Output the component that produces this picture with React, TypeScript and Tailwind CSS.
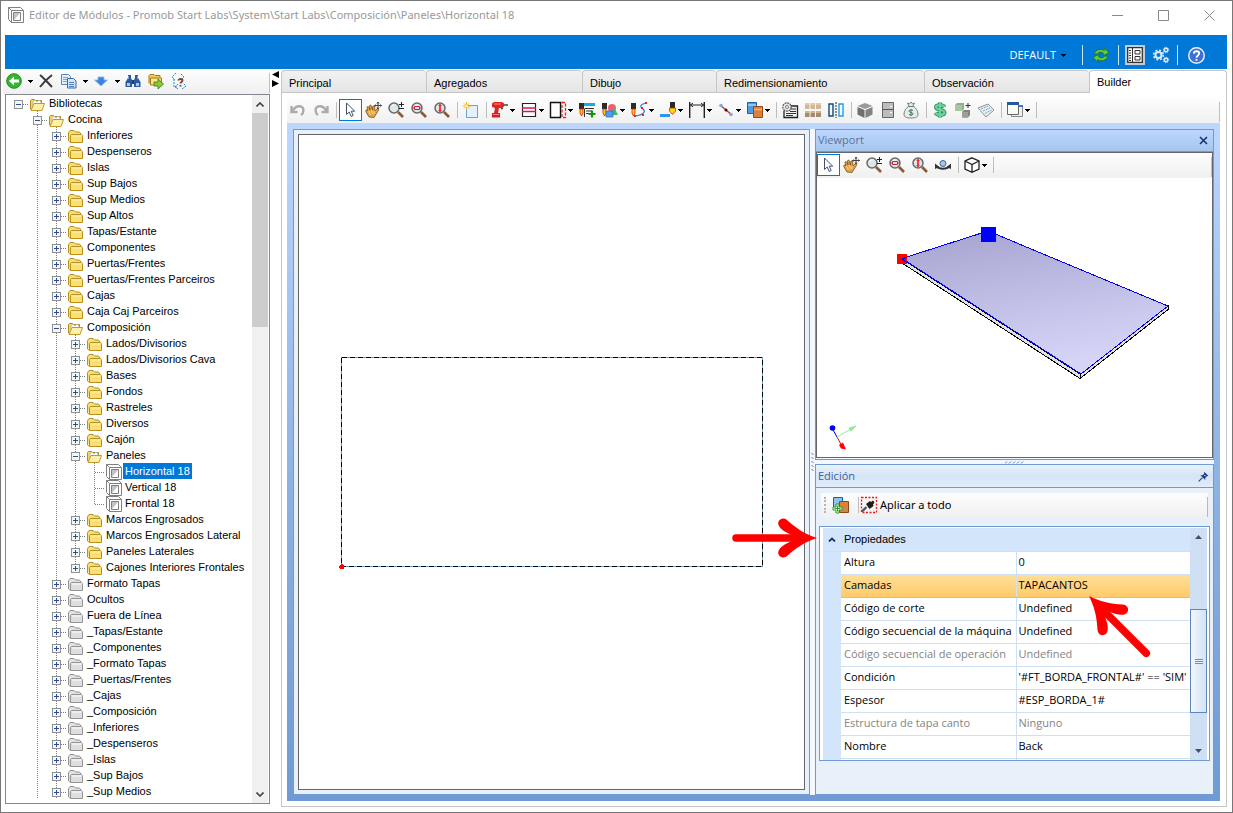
import type { ReactNode } from 'react';
import clsx from 'clsx';

type Tool = { icon: string; label: string; menu?: boolean; active?: boolean } | 'sep';
type Node = { label: string; depth: number; kind: 'open' | 'folder' | 'gray' | 'module'; last?: boolean; selected?: boolean };

const folders = (depth: number, kind: Node['kind'], labels: string[]): Node[] =>
  labels.map((label) => ({ label, depth, kind }));

const tree: Node[] = [
  { label: 'Bibliotecas', depth: 0, kind: 'open' },
  { label: 'Cocina', depth: 1, kind: 'open' },
  ...folders(2, 'folder', [
    'Inferiores', 'Despenseros', 'Islas', 'Sup Bajos', 'Sup Medios', 'Sup Altos', 'Tapas/Estante',
    'Componentes', 'Puertas/Frentes', 'Puertas/Frentes Parceiros', 'Cajas', 'Caja Caj Parceiros',
  ]),
  { label: 'Composición', depth: 2, kind: 'open' },
  ...folders(3, 'folder', [
    'Lados/Divisorios', 'Lados/Divisorios Cava', 'Bases', 'Fondos', 'Rastreles', 'Diversos', 'Cajón',
  ]),
  { label: 'Paneles', depth: 3, kind: 'open' },
  { label: 'Horizontal 18', depth: 4, kind: 'module', selected: true },
  { label: 'Vertical 18', depth: 4, kind: 'module' },
  { label: 'Frontal 18', depth: 4, kind: 'module', last: true },
  ...folders(3, 'folder', ['Marcos Engrosados', 'Marcos Engrosados Lateral', 'Paneles Laterales']),
  { label: 'Cajones Interiores Frontales', depth: 3, kind: 'folder', last: true },
  ...folders(2, 'gray', [
    'Formato Tapas', 'Ocultos', 'Fuera de Línea', '_Tapas/Estante', '_Componentes', '_Formato Tapas',
    '_Puertas/Frentes', '_Cajas', '_Composición', '_Inferiores', '_Despenseros', '_Islas', '_Sup Bajos', '_Sup Medios',
  ]),
];

const tabs = [
  { label: 'Principal', width: 'w-[145px]' },
  { label: 'Agregados', width: 'w-[156px]' },
  { label: 'Dibujo', width: 'w-[134px]' },
  { label: 'Redimensionamiento', width: 'w-[208px]' },
  { label: 'Observación', width: 'w-[165px]' },
  { label: 'Builder', width: 'flex-1', active: true },
];

const libraryTools: Tool[] = [
  { icon: 'back', label: 'Volver', menu: true },
  { icon: 'delete', label: 'Eliminar' },
  { icon: 'copy', label: 'Copiar', menu: true },
  { icon: 'down', label: 'Mover', menu: true },
  { icon: 'find', label: 'Buscar' },
  { icon: 'export', label: 'Exportar' },
  { icon: 'structure', label: 'Estructura' },
];

const builderTools: Tool[] = [
  { icon: 'undo', label: 'Deshacer' },
  { icon: 'redo', label: 'Rehacer' },
  'sep',
  { icon: 'cursor', label: 'Seleccionar', active: true },
  { icon: 'hand', label: 'Desplazar' },
  { icon: 'zoom', label: 'Zoom' },
  { icon: 'zoomWindow', label: 'Zoom ventana' },
  { icon: 'zoomExtents', label: 'Zoom extensión' },
  'sep',
  { icon: 'new', label: 'Nuevo' },
  'sep',
  { icon: 'drill', label: 'Perforación', menu: true },
  { icon: 'groove', label: 'Ranura', menu: true },
  { icon: 'edge', label: 'Borde', menu: true },
  { icon: 'toolList', label: 'Lista de herramientas' },
  { icon: 'shapes', label: 'Formas', menu: true },
  { icon: 'path', label: 'Trayectoria', menu: true },
  { icon: 'cut', label: 'Corte', menu: true },
  { icon: 'dimension', label: 'Cota', menu: true },
  { icon: 'line', label: 'Línea', menu: true },
  { icon: 'panels', label: 'Paneles', menu: true },
  'sep',
  { icon: 'program', label: 'Programa' },
  { icon: 'blocks', label: 'Bloques' },
  { icon: 'mirror', label: 'Espejar' },
  'sep',
  { icon: 'box', label: 'Módulo' },
  { icon: 'cabinet', label: 'Puerta' },
  { icon: 'bag', label: 'Costo' },
  'sep',
  { icon: 'dollar', label: 'Presupuesto' },
  { icon: 'cubes', label: 'Componentes' },
  { icon: 'notes', label: 'Notas' },
  'sep',
  { icon: 'windows', label: 'Ventanas', menu: true },
  'sep',
];

const viewportTools: Tool[] = [
  { icon: 'cursor', label: 'Seleccionar 3D', active: true },
  { icon: 'hand', label: 'Desplazar 3D' },
  { icon: 'zoom', label: 'Zoom 3D' },
  { icon: 'zoomWindow', label: 'Zoom ventana 3D' },
  { icon: 'zoomExtents', label: 'Zoom extensión 3D' },
  { icon: 'orbit', label: 'Orbitar' },
  'sep',
  { icon: 'cube', label: 'Vista', menu: true },
  'sep',
];

const properties = [
  { name: 'Altura', value: '0' },
  { name: 'Camadas', value: 'TAPACANTOS', selected: true },
  { name: 'Código de corte', value: 'Undefined' },
  { name: 'Código secuencial de la máquina', value: 'Undefined' },
  { name: 'Código secuencial de operación', value: 'Undefined', disabled: true },
  { name: 'Condición', value: "'#FT_BORDA_FRONTAL#' == 'SIM'" },
  { name: 'Espesor', value: '#ESP_BORDA_1#' },
  { name: 'Estructura de tapa canto', value: 'Ninguno', disabled: true },
  { name: 'Nombre', value: 'Back' },
];

const lens = (
  <>
    <path d="M10 10l5 5" stroke="#8a5a35" strokeWidth="2.600" />
    <circle cx="6" cy="6" r="5" fill="#dfe6e8" stroke="#66696b" strokeWidth="1.500" />
    <path d="M3.500 5c.5-1.500 1.500-2 3-2" stroke="#fff" />
  </>
);

const bit = (
  <>
    <path d="M0 1h5v6H0z" fill="#2b2b2b" />
    <path d="M1 7h3v4l-1.500 3L1 11z" fill="#ffd800" stroke="#e01010" strokeWidth=".8" />
  </>
);

const icons: Record<string, ReactNode> = {
  back: (
    <>
      <circle cx="8" cy="8" r="7.300" fill="#35b52f" stroke="#1f8a1f" strokeWidth="1" />
      <path d="M3 8l5-4.500v3h5v3H8v3z" fill="#fff" />
    </>
  ),
  delete: <path d="M2 2c4 3 8 8 12 12M14 2C10 5 6 9 2 14" stroke="#3a3a3a" strokeWidth="2" fill="none" />,
  copy: (
    <>
      <path d="M.5 1.500h7l2 2v8h-9z" fill="#e4eefb" stroke="#5a86c0" />
      <path d="M2 4.500h5M2 6.500h5M2 8.500h5" stroke="#7ba4d8" />
      <path d="M6.500 5.500h6l2.500 2.500v7H6.500z" fill="#d3e4f9" stroke="#3a69ad" />
      <path d="M8 9.500h5M8 11.500h5M8 13.500h5" stroke="#4f7fc4" />
    </>
  ),
  down: <path d="M5 4h6v3h3.500L8 13 1.500 7H5z" fill="#3f82e0" stroke="#8db6f0" strokeWidth=".8" />,
  find: (
    <>
      <path d="M3 2h3v3l1 2v7H.5V9L3 5zM10 2h3v3l2.500 4v5H9V7l1-2z" fill="#2e5a9c" />
      <path d="M7 7h2v4H7z" fill="#1c3f78" />
      <path d="M2 10h3v3H2zM11 10h3v3h-3z" fill="#a9c7ef" />
      <path d="M3.500 3v3M12.500 3v3" stroke="#7fa6da" />
    </>
  ),
  export: (
    <>
      <path d="M1 10.500V2.500l1-1h4l1 1h5v2" fill="#f0cf58" stroke="#a67c12" />
      <path d="M2.500 5h11v7h-11z" fill="#fbe58a" stroke="#a67c12" />
      <path d="M6 9h4V6l5.500 5-5.500 5v-3H6z" fill="#8dc63a" stroke="#3c7a12" strokeWidth=".8" />
    </>
  ),
  structure: (
    <>
      <path d="M5 0L1 4l3 3M3 6v8h4M10 1l3 3-3 3M11 16l4-3-3-3M7 11l-3 3 3 2" stroke="#1f86e0" strokeDasharray="2 1" fill="none" />
      <path d="M7.500 7.500c0-2 4-2 4 0 0 1.500-2 1.300-2 3M9.500 12v1.500" stroke="#7a4326" strokeWidth="1.800" fill="none" />
    </>
  ),
  undo: <path d="M1.500 4v6h6M2.500 9c2-3.500 5-5.500 8.500-4.500 3.500 1.500 3 6.500 0 8.500" stroke="#ababab" strokeWidth="2.400" fill="none" />,
  redo: <path d="M14.500 4v6h-6M13.500 9C11.500 5.500 8.500 3.500 5 4.500 1.500 6 2 11 5 13" stroke="#ababab" strokeWidth="2.400" fill="none" />,
  cursor: <path d="M4.500 1v11.500l2.700-2.500 2 4.500 2-1-2-4.300h3.500z" fill="#fff" stroke="#42506b" />,
  hand: (
    <>
      <path d="M4 15L.8 9.500c-.6-1.500 1-2 2-.5L2 5.500c0-1.200 1.500-1.200 2 0L5 8 4.500 4c.2-1.300 1.700-1 2 0l1 4 .3-3.500c.4-1 1.700-.8 1.800.3l.3 4L12 7c1-.8 2.200 0 1.500 1.300L10.500 13 9 15.500z" fill="#e3a548" stroke="#7b4b14" strokeWidth=".8" />
      <path d="M3.500 9l2 4M6 8l1.500 4M9 9v3" stroke="#fbe0a5" strokeWidth=".8" />
      <path d="M13 0v7M9.500 3.500h7M12 1.500L13 0l1 1.500M12 5.500L13 7l1-1.500M10.500 2.500l-1 1 1 1M15.500 2.500l1 1-1 1" stroke="#333" strokeWidth=".9" fill="none" />
    </>
  ),
  zoom: (
    <>
      {lens}
      <path d="M13.500 0v5M11 2.500h5M11 6.500h5" stroke="#222" />
    </>
  ),
  zoomWindow: (
    <>
      {lens}
      <path d="M3.500 4.500h5v3h-5zM1.500 6h2M8.500 6h2" fill="none" stroke="#d02030" />
    </>
  ),
  zoomExtents: (
    <>
      {lens}
      <path d="M6 2.500v7" stroke="#f03030" strokeWidth="1.800" />
      <path d="M4 4l2-2.500L8 4zM4 8l2 2.500L8 8z" fill="#f03030" />
    </>
  ),
  new: (
    <>
      <path d="M3.500 3.500h11v12h-11z" fill="#e3f0fd" stroke="#6b9fd8" />
      <path d="M3.500 0v8M0 4h8M1 1.500l5 5M6 1.500l-5 5" stroke="#e8b21c" />
      <circle cx="3.500" cy="4" r="1.500" fill="#fff3a0" />
    </>
  ),
  drill: (
    <>
      <path d="M0 1.500L2 0h8l2 1.500v3L10 6H7l-1 5H2l1-5-3-1z" fill="#e02424" />
      <path d="M12 3h4M9 6.500h2" stroke="#444" strokeWidth="1.500" />
      <path d="M0 11h8v4.500H0z" fill="#d81c1c" />
      <path d="M2 2h7M1 12.500h6" stroke="#ff8a80" />
    </>
  ),
  groove: (
    <>
      <path d="M1.500 1.500h13v13h-13z" fill="#fff" stroke="#222" strokeWidth="1.200" />
      <path d="M1 6h14M1 9.500h14" stroke="#d4145a" strokeWidth="1.600" />
    </>
  ),
  edge: (
    <>
      <path d="M.5.5h10v15H.5z" fill="#fff" stroke="#111" strokeWidth="1.400" />
      <path d="M12 .5h3.500v15H12z" fill="none" stroke="#f02020" strokeWidth="1.300" strokeDasharray="3 1.500" />
    </>
  ),
  toolList: (
    <>
      {bit}
      <path d="M5 1h11v3H5z" fill="#19a8e8" />
      <path d="M5.500 6.500V15M6 6.500h9M7 9h6M7 11.500h3" stroke="#333" />
      <path d="M13 8.500v7M9.500 12h7" stroke="#129312" strokeWidth="2.200" />
    </>
  ),
  shapes: (
    <>
      {bit}
      <circle cx="10" cy="6" r="4" fill="#f06070" />
      <path d="M12 5l4 8H9z" fill="#45b86a" />
      <path d="M4 9h7v6H4z" fill="#4f9dee" stroke="#2a68c0" strokeWidth=".7" />
    </>
  ),
  path: (
    <>
      {bit}
      <path d="M15 1c-7 2-6 4-3 6s1 6-8 7" fill="none" stroke="#2485e0" strokeWidth="1.300" />
      <path d="M14 0h2v2h-2zM10 5h2v2h-2zM3 13h2v2H3zM11 12h2v2h-2z" fill="#e22" />
    </>
  ),
  cut: (
    <>
      <path d="M0 12h10v3H0z" fill="#2d95ef" />
      <path d="M10 0h5v6h-5z" fill="#2b2b2b" />
      <path d="M9.500 6h6v3l-3 3.500-3-3.500z" fill="#ffdc00" stroke="#d82020" strokeWidth=".8" />
    </>
  ),
  dimension: (
    <>
      <path d="M.7 0v16M15.300 0v16" stroke="#222" strokeWidth="1.400" />
      <path d="M1 3h14M4 1L1.500 3 4 5M12 1l2.500 2L12 5" stroke="#222" fill="none" />
    </>
  ),
  line: (
    <>
      <path d="M2 3l12 10" stroke="#e02828" strokeWidth="1.500" />
      <circle cx="3" cy="3.500" r="1.800" fill="#7eaade" />
      <circle cx="13" cy="12.500" r="1.800" fill="#7eaade" />
      <circle cx="8" cy="8" r="1.500" fill="#222" />
    </>
  ),
  panels: (
    <>
      <path d="M.5.5h9v11h-9z" fill="#4c9de4" stroke="#1c5fa8" />
      <path d="M1 3h8" stroke="#a8d4ff" strokeWidth="1.500" />
      <path d="M6.500 4.500h9v11h-9z" fill="#d9803f" stroke="#9a4b12" />
      <path d="M7 7.500h8" stroke="#ffb070" strokeWidth="1.500" />
    </>
  ),
  addPanel: (
    <>
      <path d="M.5.5h9v11h-9z" fill="#8ec4f2" stroke="#1c5fa8" />
      <path d="M6.500 4.500h9v11h-9z" fill="#c9874e" stroke="#8a4a16" />
      <path d="M7 7h8" stroke="#f47c20" strokeWidth="2" />
      <path d="M3 7h3v3h3v3H6v3H3v-3H0v-3h3z" fill="#fff" stroke="#2b9a22" />
      <path d="M4.500 8.500v6M1.500 11.500h6" stroke="#2b9a22" />
    </>
  ),
  program: (
    <>
      <path d="M4 4h11.500v11.500H2V9" fill="#f2f2f2" stroke="#222" strokeWidth="1.300" />
      <path d="M8 7h6M8 9.500h6M4 11.500h10M4 13.500h7" stroke="#333" />
      <circle cx="5" cy="5" r="4.200" fill="#e4e4e4" stroke="#555" strokeWidth="1.200" strokeDasharray="2 .8" />
      <circle cx="5" cy="5" r="1.500" fill="#fff" stroke="#666" strokeWidth=".8" />
    </>
  ),
  blocks: (
    <>
      <path d="M0 1h4.500v6H0zM5.500 1H10v6H5.500zM11 1h5v6h-5z" fill="#d3b795" />
      <path d="M0 9h4.500v6H0zM5.500 9H10v6H5.500zM11 9h5v6h-5z" fill="#a58c6c" />
      <path d="M0 2h16M0 10h16" stroke="#efe0c8" />
    </>
  ),
  mirror: (
    <>
      <path d="M1 2h4v12H1z" fill="none" stroke="#0b4a80" strokeWidth="1.400" />
      <path d="M11 2h4v12h-4z" fill="#fff" stroke="#1e9bf0" strokeWidth="1.400" />
      <path d="M8 0v16" stroke="#222" strokeDasharray="2 1" />
    </>
  ),
  box: (
    <>
      <path d="M8 1l7.500 3L8 7 .5 4z" fill="#9a9a9a" />
      <path d="M.5 5L7.500 8v8L.5 12.500z" fill="#6f6f6f" />
      <path d="M15.500 5L8.500 8v8l7-3.500z" fill="#828282" />
    </>
  ),
  cabinet: (
    <>
      <path d="M2.500.5h11v15h-11z" fill="#bdbdbd" stroke="#666" />
      <path d="M2.500 7.500h11" stroke="#555" />
      <path d="M10 4.500h2M10 10.500h2" stroke="#fff" />
    </>
  ),
  bag: (
    <>
      <path d="M6 4L4.500 1l2 .8L8 0l1.500 1.800 2-.8L10 4c3 2 5 5 5 8s-2 4-7 4-7-1-7-4 2-6 5-8z" fill="#e6ece6" stroke="#7a8580" />
      <path d="M5.500 4.500h5" stroke="#777" />
      <path d="M10 8.500c-1-1-4-.8-4 .7s4 1 4 2.600-3 1.700-4 .5M8 7v7" stroke="#3d7d5c" fill="none" />
    </>
  ),
  dollar: (
    <>
      <path d="M12.500 5C11 2.500 4 2.500 4 5.300c0 3 8.500 2 8.500 5.200 0 3-7.500 3-9 .3M8 .5v15" fill="none" stroke="#2a8f5a" strokeWidth="4" />
      <path d="M12.500 5C11 2.500 4 2.500 4 5.300c0 3 8.500 2 8.500 5.200 0 3-7.500 3-9 .3M8 .5v15" fill="none" stroke="#6fd3a0" strokeWidth="2.200" />
    </>
  ),
  cubes: (
    <>
      <path d="M0 3l2-2h7v6L7 9H0z" fill="#8fb388" />
      <path d="M0 3h7v6H0z" fill="#a9c8a2" />
      <path d="M7 10l2-2h6v5l-2 2.500H7z" fill="#7d867d" />
      <path d="M7 10h6v5.500H7z" fill="#9aa29a" />
      <path d="M13 1v5M10.500 3.500h5" stroke="#333" />
    </>
  ),
  notes: (
    <>
      <path d="M0 6l10-4 6 6-8 7z" fill="#e9eef0" stroke="#8a9298" />
      <path d="M3 7l7-3M5 9l7-3M7 11.500L13.500 8" stroke="#7aa0c4" strokeDasharray="2 1" />
    </>
  ),
  windows: (
    <>
      <path d="M4.500 3.500h11v11h-11z" fill="#f0f0f0" stroke="#888" />
      <path d="M4 3h12v2H4z" fill="#3f78c8" />
      <path d="M.5.5h11v12H.5z" fill="#fbfbf6" stroke="#666" />
      <path d="M0 0h12v3H0z" fill="#28569c" />
    </>
  ),
  orbit: (
    <>
      <path d="M2 9.500c2 3 10 3 12 0" stroke="#333" strokeWidth="2" fill="none" />
      <path d="M0 12V6.500l4.500 3.500zM16 12V6.500L11.500 10z" fill="#333" />
      <circle cx="8" cy="6.500" r="3" fill="#a9c4e8" stroke="#40649a" />
    </>
  ),
  cube: <path d="M8 .8l7 3.200v8L8 15.300 1 12V4zM1 4l7 3.500L15 4M8 7.500v7.800" fill="#fff" stroke="#222" strokeWidth="1.300" />,
  applyAll: (
    <>
      <path d="M.5.5h15v15H.5z" fill="#f4f4f4" stroke="#f01818" strokeWidth="1.300" strokeDasharray="2 1.500" />
      <path d="M1 14.500l4.500-4.500" stroke="#555" strokeWidth="2.400" />
      <path d="M5 7l4-3 1 1 2-1.500 1.500 2L12 7.500l.5 1.500-4 3z" fill="#1d1d1d" />
    </>
  ),
  refresh: (
    <>
      <path d="M2 7c1-4 6-5 9-3V1.500L15 6l-5 2.500V6.300C8 5 6 5 5 7z" fill="#5ccf3a" stroke="#23701a" strokeWidth=".7" />
      <path d="M14 9c-1 4-6 5-9 3v2.500L1 10l5-2.500v2.200c2 1.300 4 1.300 5-.7z" fill="#5ccf3a" stroke="#23701a" strokeWidth=".7" />
    </>
  ),
  layout: (
    <>
      <path d="M.7.7h14.600v14.600H.7z" fill="#fff" stroke="#333" strokeWidth="1.300" />
      <path d="M5.500 1v14" stroke="#333" />
      <path d="M2 3.500h2M2 6h2M2 8.500h2M2 11h2M2 13.500h2" stroke="#333" />
      <path d="M8 3.500h5v3.500H8zM8 9.500h5V13H8z" fill="none" stroke="#333" />
    </>
  ),
  gears: (
    <g fill="none" stroke="#dcebfa">
      <circle cx="5.500" cy="8" r="3" strokeWidth="2" />
      <circle cx="5.500" cy="8" r="4.800" strokeWidth="1.600" strokeDasharray="2 1.770" />
      <circle cx="13" cy="3" r="1.700" strokeWidth="1.500" />
      <circle cx="13" cy="3" r="2.700" strokeDasharray="1.200 .9" />
      <circle cx="13" cy="13" r="1.700" strokeWidth="1.500" />
      <circle cx="13" cy="13" r="2.700" strokeDasharray="1.200 .9" />
    </g>
  ),
  help: (
    <>
      <circle cx="8" cy="8" r="7.300" fill="#3d6fd6" stroke="#e8effc" strokeWidth="1.400" />
      <path d="M5.500 6.200c.2-3 5-2.800 5 0C10.500 8 8 8 8 10M8 11.300v1.700" fill="none" stroke="#fff" strokeWidth="1.800" />
    </>
  ),
  module: (
    <>
      <path d="M.5.5h12l3 3v12h-12l-3-3zM.5.5l3 3h12M3.500 3.500v12" fill="#fff" stroke="#808080" />
      <path d="M5.500 5.500h7v8h-7z" fill="#fff" stroke="#808080" />
      <path d="M6 6h6l-6 7z" fill="#c4c4c4" />
    </>
  ),
  pin: (
    <>
      <path d="M9 1l6 6-2 .5-2.500 2.500v3L3.500 6h3L9 3.500z" fill="#1f3f80" />
      <path d="M6.500 9.500L1 15" stroke="#1f3f80" strokeWidth="1.500" />
      <path d="M9 5.500l2 2" stroke="#fff" strokeWidth="1.400" />
    </>
  ),
};

const Icon = ({ name, className = 'size-4' }: { name: string; className?: string }) => (
  <svg viewBox="0 0 16 16" className={clsx('shrink-0 overflow-visible', className)} fill="none" aria-hidden="true">
    {icons[name]}
  </svg>
);

const Caret = () => (
  <svg viewBox="0 0 5 3" className="h-[3px] w-[5px] shrink-0" shapeRendering="crispEdges" aria-hidden="true">
    <path d="M0 0h5L2.500 3z" fill="#000" />
  </svg>
);

const Separator = () => (
  <span className="flex w-1.5 shrink-0 justify-center">
    <span className="h-4 w-px bg-[#bdbdbd]" />
  </span>
);

const Toolbar = ({ tools, wide }: { tools: Tool[]; wide?: boolean }) => (
  <div
    role="toolbar"
    className={clsx('flex h-[25px] shrink-0 items-center bg-linear-to-b from-[#fdfdfd] to-[#f0f0f0] pb-px', wide && '-ml-0.5')}
  >
    {tools.map((tool, i) =>
      tool === 'sep' ? (
        <Separator key={i} />
      ) : (
        <button
          key={i}
          type="button"
          aria-label={tool.label}
          className={clsx(
            'flex h-[22px] shrink-0 items-center border',
            tool.menu ? (wide ? 'w-8' : 'w-[29px]') : 'w-[23px]',
            tool.active ? 'border-[#0078d7] bg-white' : 'border-transparent',
          )}
        >
          <span className="flex w-5 shrink-0 justify-center">
            <Icon name={tool.icon} />
          </span>
          {tool.menu && (
            <span className={wide ? 'pl-1' : ''}>
              <Caret />
            </span>
          )}
        </button>
      ),
    )}
    <span className="ml-auto h-5 w-px self-end bg-[#c0c0c0]" />
  </div>
);

const Folder = ({ kind }: { kind: Node['kind'] }) => {
  if (kind === 'open') {
    return (
      <svg viewBox="0 0 15 13" className="h-[13px] w-[15px] shrink-0" aria-hidden="true">
        <path d="M.5 11V2.500l1-1h3l1 1h6V11z" fill="#f3d56a" stroke="#b58a1e" />
        <path d="M3 4l2-2 2 2 2-2 2 2v3H3z" fill="#fff" stroke="#a8a8b8" strokeWidth=".7" />
        <path d="M1 12.500l3-7h10.500l-2.500 7z" fill="#fdf0a8" stroke="#c09a30" />
      </svg>
    );
  }
  const gray = kind === 'gray';
  return (
    <svg viewBox="0 0 15 13" className="h-[13px] w-[15px] shrink-0" aria-hidden="true">
      <path d="M.5 11V2.500l1.500-2h4l1.500 1.500h4l1.500 2" fill={gray ? '#e0e0e0' : '#f7dc7a'} stroke={gray ? '#949494' : '#b8901e'} />
      <path d="M2.500 12.500v-7l1-1h10l1 1v7z" fill={gray ? '#dedede' : '#fbdf70'} stroke={gray ? '#949494' : '#b8901e'} />
      <path d="M.5 11l2 1.500" stroke={gray ? '#949494' : '#b8901e'} />
      <path d="M4 6h9.500" stroke={gray ? '#fff' : '#fff3b8'} />
    </svg>
  );
};

// One 19px guide column of the tree: dotted spine, branch and expander
const Guide = ({ node, own }: { node: Node; own: boolean }) => {
  const branch = own && node.kind !== 'module';
  return (
    <svg viewBox="0 0 19 16" className="h-4 w-[19px] shrink-0" shapeRendering="crispEdges" aria-hidden="true">
      {node.depth > 0 && (
        <path d={own && node.last ? 'M9.500 0v9' : 'M9.500 0v16'} stroke="#808080" strokeDasharray="1 1" />
      )}
      {own && <path d="M10 9.500h9" stroke="#808080" strokeDasharray="1 1" />}
      {branch && (
        <>
          <rect x="5.500" y="5.500" width="8" height="8" fill="#f6f6f6" stroke="#919191" />
          <path d={node.kind === 'open' ? 'M7 9.500h5' : 'M7 9.500h5M9.500 7v5'} stroke="#2b4fa0" />
        </>
      )}
    </svg>
  );
};

const TreeRow = ({ node }: { node: Node }) => (
  <li role="treeitem" aria-level={node.depth + 1} aria-selected={!!node.selected} className="flex h-4 items-center pl-[3px]">
    {Array.from({ length: node.depth }, (_, level) =>
      level === 0 ? (
        <span key={level} className="w-[19px] shrink-0" />
      ) : (
        <Guide key={level} node={node} own={false} />
      ),
    )}
    <Guide node={node} own />
    <span className="flex w-[19px] shrink-0 items-center justify-center pt-0.5">
      {node.kind === 'module' ? <Icon name="module" /> : <Folder kind={node.kind} />}
    </span>
    <button type="button" className={clsx('h-4 px-0.5 leading-4 whitespace-nowrap', node.selected && 'bg-[#0078d7] text-white')}>
      {node.label}
    </button>
  </li>
);

const LibraryTree = () => (
  <aside className="flex w-[265px] shrink-0 flex-col pb-[3px]">
    <Toolbar tools={libraryTools} wide />
    <div className="flex min-h-0 flex-1 border border-[#828790] bg-white">
      <ul role="tree" aria-label="Bibliotecas" className="min-w-0 flex-1 overflow-hidden">
        {tree.map((node, i) => (
          <TreeRow key={i} node={node} />
        ))}
      </ul>
      <div className="mr-px flex w-4 shrink-0 flex-col bg-[#f0f0f0]">
        <button type="button" aria-label="Subir" className="flex h-[18px] items-center justify-center">
          <svg viewBox="0 0 8 5" className="h-[5px] w-2"><path d="M.5 4.500L4 1l3.500 3.500" fill="none" stroke="#444" strokeWidth="1.600" /></svg>
        </button>
        <div className="h-[214px] bg-[#cdcdcd]" />
        <button type="button" aria-label="Bajar" className="mt-auto flex h-[18px] items-center justify-center">
          <svg viewBox="0 0 8 5" className="h-[5px] w-2"><path d="M.5.5L4 4 7.500.5" fill="none" stroke="#444" strokeWidth="1.600" /></svg>
        </button>
      </div>
    </div>
  </aside>
);

const TitleBar = () => (
  <header className="flex h-[34px] shrink-0 items-center pb-1.5 pl-[7px] text-[#999]">
    <Icon name="module" />
    <h1 className="ml-[5px] truncate font-['Noto_Sans',sans-serif] text-[11px]">
      Editor de Módulos - Promob Start Labs\System\Start Labs\Composición\Paneles\Horizontal 18
    </h1>
    <div className="ml-auto flex">
      <button type="button" aria-label="Minimizar" className="flex h-7 w-[46px] items-center justify-center">
        <svg viewBox="0 0 11 11" className="size-[11px]"><path d="M0 5.500h11" stroke="#888" /></svg>
      </button>
      <button type="button" aria-label="Maximizar" className="flex h-7 w-[46px] items-center justify-center">
        <svg viewBox="0 0 11 11" className="size-[11px]"><path d="M.5.5h10v10H.5z" fill="none" stroke="#888" /></svg>
      </button>
      <button type="button" aria-label="Cerrar" className="flex h-7 w-[46px] items-center justify-center">
        <svg viewBox="0 0 11 11" className="size-[11px]"><path d="M.5.5l10 10M10.500.5l-10 10" stroke="#888" /></svg>
      </button>
    </div>
  </header>
);

const BlueBar = () => (
  <div className="flex h-[34px] shrink-0 items-center justify-end bg-[#0078d7] pt-1.5 pr-[22px] font-['Open_Sans',sans-serif] text-[11px] text-white">
    <button type="button" className="flex items-center gap-[5px]">
      DEFAULT
      <Caret />
    </button>
    <span className="ml-4 h-5 w-px bg-white/80" />
    <button type="button" aria-label="Actualizar" className="flex w-[35px] justify-center"><Icon name="refresh" className="size-[18px]" /></button>
    <span className="h-5 w-px bg-white/80" />
    <button type="button" aria-label="Diseño" className="ml-1.5 flex size-5 items-center justify-center bg-[#c3ccd6]"><Icon name="layout" /></button>
    <button type="button" aria-label="Configuración" className="flex w-8 justify-center"><Icon name="gears" /></button>
    <span className="h-5 w-px bg-white/80" />
    <button type="button" aria-label="Ayuda" className="ml-2.5 flex"><Icon name="help" className="size-[17px]" /></button>
  </div>
);

const PlanView = () => (
  <section aria-label="Plano" className="flex min-w-0 flex-1 border border-[#6f9ad3] bg-[#e8f0fa] p-1">
    <div className="min-w-0 flex-1 border border-[#666] bg-white">
      <svg viewBox="299 135 505 655" className="h-full w-full" shapeRendering="crispEdges">
        <path d="M341.500 357.500h421v210h-421z" fill="none" stroke="#5f9fd0" />
        <path d="M341.500 357.500h421v210h-421z" fill="none" stroke="#000" strokeDasharray="5 3" />
        <circle cx="341.500" cy="567.500" r="2.500" fill="#f00" />
      </svg>
    </div>
  </section>
);

const Viewport = () => (
  <section aria-label="Viewport" className="flex min-h-0 flex-1 flex-col border border-[#6f9ad3] pb-px">
    <div className="flex h-[22px] shrink-0 items-center justify-between border-b border-[#6f9ad3] bg-linear-to-b from-[#bdd7ff] to-[#a6c6ee] pr-1 pl-0.5 text-[#5a7396]">
      <h2>Viewport</h2>
      <button type="button" aria-label="Cerrar viewport" className="p-px">
        <svg viewBox="0 0 9 9" className="size-[9px]"><path d="M1 1l7 7M8 1L1 8" stroke="#15356e" strokeWidth="1.600" /></svg>
      </button>
    </div>
    <div className="flex min-h-0 flex-1 flex-col border border-[#666] bg-white">
      <Toolbar tools={viewportTools} />
      <svg viewBox="817 178 395 279" className="min-h-0 w-full flex-1">
        <defs>
          <linearGradient id="board" x1="0" y1="0" x2=".3" y2="1">
            <stop offset="0" stopColor="#a5a3cf" />
            <stop offset="1" stopColor="#d5d4f7" />
          </linearGradient>
        </defs>
        <g shapeRendering="crispEdges">
          <path d="M902 259v4l178 115.500 88-69v-3.500l-88 68z" fill="#e2e2e2" stroke="#000" />
          <path d="M902 258.500l86-27.500 180 75-87 68z" fill="url(#board)" stroke="#00f" />
          <path d="M1080.500 374v4" stroke="#000" />
          <path d="M981 227h15v15h-15z" fill="#00f" />
          <path d="M897 254h10v10h-10z" fill="#f00" />
          <path d="M907 257l-5 2 5 3.500" fill="none" stroke="#00f" />
        </g>
        <path d="M832 428l5 9" stroke="#00f" />
        <path d="M837 437l5 9" stroke="#f00" />
        <path d="M837 437l14-8" stroke="#90ee90" />
        <circle cx="832.500" cy="428" r="2.800" fill="#00f" />
        <path d="M839 445l4-2.500 3 7-5-1z" fill="#f00" />
        <path d="M849 428l7-2-5 5z" fill="#90ee90" stroke="#90ee90" />
      </svg>
    </div>
  </section>
);

const PropertyGrid = () => (
  <div className="mx-[3px] mt-2 mb-[33px] flex min-h-0 flex-1 overflow-hidden border border-[#6f9ad3] bg-white pt-px pr-0.5 pl-[3px]">
    <div className="min-w-0 flex-1 overflow-hidden">
      <table className="w-full table-fixed border-collapse">
        <colgroup>
          <col className="w-[18px]" />
          <col className="w-[175px]" />
          <col />
        </colgroup>
        <thead>
          <tr className="h-[23px] border-b border-[#cfe0f5] bg-[#d3e5fb]">
            <th className="p-0">
              <svg viewBox="0 0 8 5" className="mx-auto h-[5px] w-2"><path d="M1 4.500L4 1.500l3 3" fill="none" stroke="#15356e" strokeWidth="1.800" /></svg>
            </th>
            <th colSpan={2} className="p-0 pl-[3px] text-left font-['Liberation_Sans',sans-serif] font-normal">Propiedades</th>
          </tr>
        </thead>
        <tbody>
          {properties.map((row) => {
            const line = row.selected ? 'border-b-[#f5b95c]' : 'border-b-[#cfe0f5]';
            return (
              <tr
                key={row.name}
                className={clsx(
                  'h-[23px]',
                  row.selected && 'bg-linear-to-b from-[#ffe09a] to-[#ffcb68]',
                  row.disabled && 'text-[#848484]',
                )}
              >
                <td className="bg-[#d3e5fb] p-0" />
                <td className={clsx('truncate border-r border-b border-r-[#cfe0f5] p-0 pl-[3px]', line)}>{row.name}</td>
                <td className={clsx('overflow-hidden border-b p-0 pl-0.5 whitespace-nowrap', line)}>{row.value}</td>
              </tr>
            );
          })}
          <tr className="h-[23px]">
            <td className="bg-[#d3e5fb] p-0" />
            <td className="border-r border-[#cfe0f5]" />
            <td />
          </tr>
        </tbody>
      </table>
    </div>
    <div className="flex w-[17px] shrink-0 flex-col bg-[#cfdff4]">
      <button type="button" aria-label="Subir propiedades" className="flex h-[18px] shrink-0 items-center justify-center">
        <svg viewBox="0 0 7 4" className="h-1 w-[7px]"><path d="M0 4h7L3.500 0z" fill="#3f4f6e" /></svg>
      </button>
      <div className="mt-[63px] flex h-[104px] shrink-0 items-center justify-center border border-[#5f86b8] bg-linear-to-r from-[#f2f7fd] to-[#d3e2f6]">
        <span className="h-[5px] w-2 border-y border-[#6b8fc4] bg-linear-to-b from-[#e6effa] from-40% via-[#6b8fc4] to-[#e6effa] to-60%" />
      </div>
      <button type="button" aria-label="Bajar propiedades" className="mt-auto flex h-[18px] shrink-0 items-center justify-center">
        <svg viewBox="0 0 7 4" className="h-1 w-[7px]"><path d="M0 0h7L3.500 4z" fill="#3f4f6e" /></svg>
      </button>
    </div>
  </div>
);

const arrowShape = (
  <>
    <path d="M-81 0h60" stroke="#f00" strokeWidth="7.500" strokeLinecap="round" />
    <path d="M0 0C-12-4-20-9-30-18c-5-4-11 1-8 6 2 4 8 7 13 9v6c-5 2-11 5-13 9-3 5 3 10 8 6C-20 9-12 4 0 0z" fill="#f00" />
  </>
);

const EditPanel = () => (
  <section aria-label="Edición" className="relative flex h-[331px] shrink-0 flex-col border border-[#6f9ad3] bg-[#e8f0fa]">
    <div className="flex h-[23px] shrink-0 items-center justify-between border-b border-[#6f9ad3] bg-linear-to-b from-[#eaf2fc] via-[#d5e4f7] to-[#e3edfa] pr-1 pl-0.5 text-[#3a5f9e]">
      <h2>Edición</h2>
      <button type="button" aria-label="Fijar panel"><Icon name="pin" className="size-[11px]" /></button>
    </div>
    <div role="toolbar" className="mx-[5px] mt-[5px] flex h-[25px] shrink-0 items-center bg-linear-to-b from-[#fdfdfd] to-[#f0f0f0] pb-px pl-[3px]">
      <span className="h-4 w-0.5 border-l-2 border-dotted border-[#b5b5b5]" />
      <button type="button" aria-label="Agregar" className="flex w-[29px] justify-center"><Icon name="addPanel" /></button>
      <Separator />
      <button type="button" className="flex items-center gap-[3px] font-['Noto_Sans',sans-serif]"><Icon name="applyAll" />Aplicar a todo</button>
      <span className="ml-auto h-5 w-px self-end bg-[#b8b8b8]" />
    </div>
    <PropertyGrid />
    <svg viewBox="-86 -22 90 44" className="pointer-events-none absolute top-[51px] -left-[85px] h-11 w-[90px]" aria-hidden="true">
      {arrowShape}
    </svg>
    <svg viewBox="-4 -4 68 68" className="pointer-events-none absolute top-[127px] left-[269px] size-[68px]" aria-hidden="true">
      <g transform="rotate(225)">{arrowShape}</g>
    </svg>
  </section>
);

const Grip = ({ className }: { className: string }) => (
  <svg viewBox="0 0 19 3" className={className} aria-hidden="true">
    <path d="M0 2.500L2 .5M4 2.500l2-2M8 2.500l2-2M12 2.500l2-2M16 2.500l2-2" stroke="#4c7fc4" />
  </svg>
);

const Workspace = () => (
  <main className="flex min-w-0 flex-1 flex-col pt-px">
    <div role="tablist" className="flex h-[23px] shrink-0 items-stretch">
      {tabs.map((tab) => (
        <button
          key={tab.label}
          type="button"
          role="tab"
          aria-selected={!!tab.active}
          className={clsx(
            'shrink-0 rounded-t-sm border-t border-l border-[#c6c6c6] pl-[7px] text-left',
            tab.width,
            tab.active ? 'border-r bg-white pt-px' : 'border-b bg-linear-to-b from-[#f1f1f1] to-[#e5e5e5] pt-[3px]',
          )}
        >
          {tab.label}
        </button>
      ))}
    </div>
    <div className="flex min-h-0 flex-1 flex-col border-x border-b border-[#c6c6c6] p-[5px] pr-1.5">
      <Toolbar tools={builderTools} />
      <div className="flex min-h-0 flex-1 bg-linear-to-b from-[#bdd7ff] via-[#8fb4e6] to-[#6f9ad3] p-1.5">
        <div className="flex min-w-0 flex-1 bg-[#f4f8fe] font-['Open_Sans',sans-serif]">
          <PlanView />
          <div className="flex w-[5px] shrink-0 items-center justify-center">
            <Grip className="h-[3px] w-[19px] shrink-0 rotate-90" />
          </div>
          <div className="flex w-[399px] shrink-0 flex-col">
            <Viewport />
            <div className="flex h-1 shrink-0 items-center justify-center">
              <Grip className="h-[3px] w-[19px]" />
            </div>
            <EditPanel />
          </div>
        </div>
      </div>
    </div>
  </main>
);

export default function App() {
  return (
    <div className="flex h-screen flex-col overflow-hidden border border-[#777] bg-white font-['Liberation_Sans',sans-serif] text-[11px] text-black">
      <TitleBar />
      <div className="flex min-h-0 flex-1 flex-col pr-[5px] pb-[5px] pl-1">
        <BlueBar />
        <div className="flex min-h-0 flex-1">
          <LibraryTree />
          <div className="flex w-[11px] shrink-0 flex-col items-center gap-0.5 pt-0.5">
            <svg viewBox="0 0 7 7" className="size-[7px]" aria-hidden="true"><path d="M7 0v7L0 3.500z" fill="#000" /></svg>
            <svg viewBox="0 0 7 7" className="size-[7px]" aria-hidden="true"><path d="M0 0v7l7-3.500z" fill="#000" /></svg>
          </div>
          <Workspace />
        </div>
      </div>
    </div>
  );
}
